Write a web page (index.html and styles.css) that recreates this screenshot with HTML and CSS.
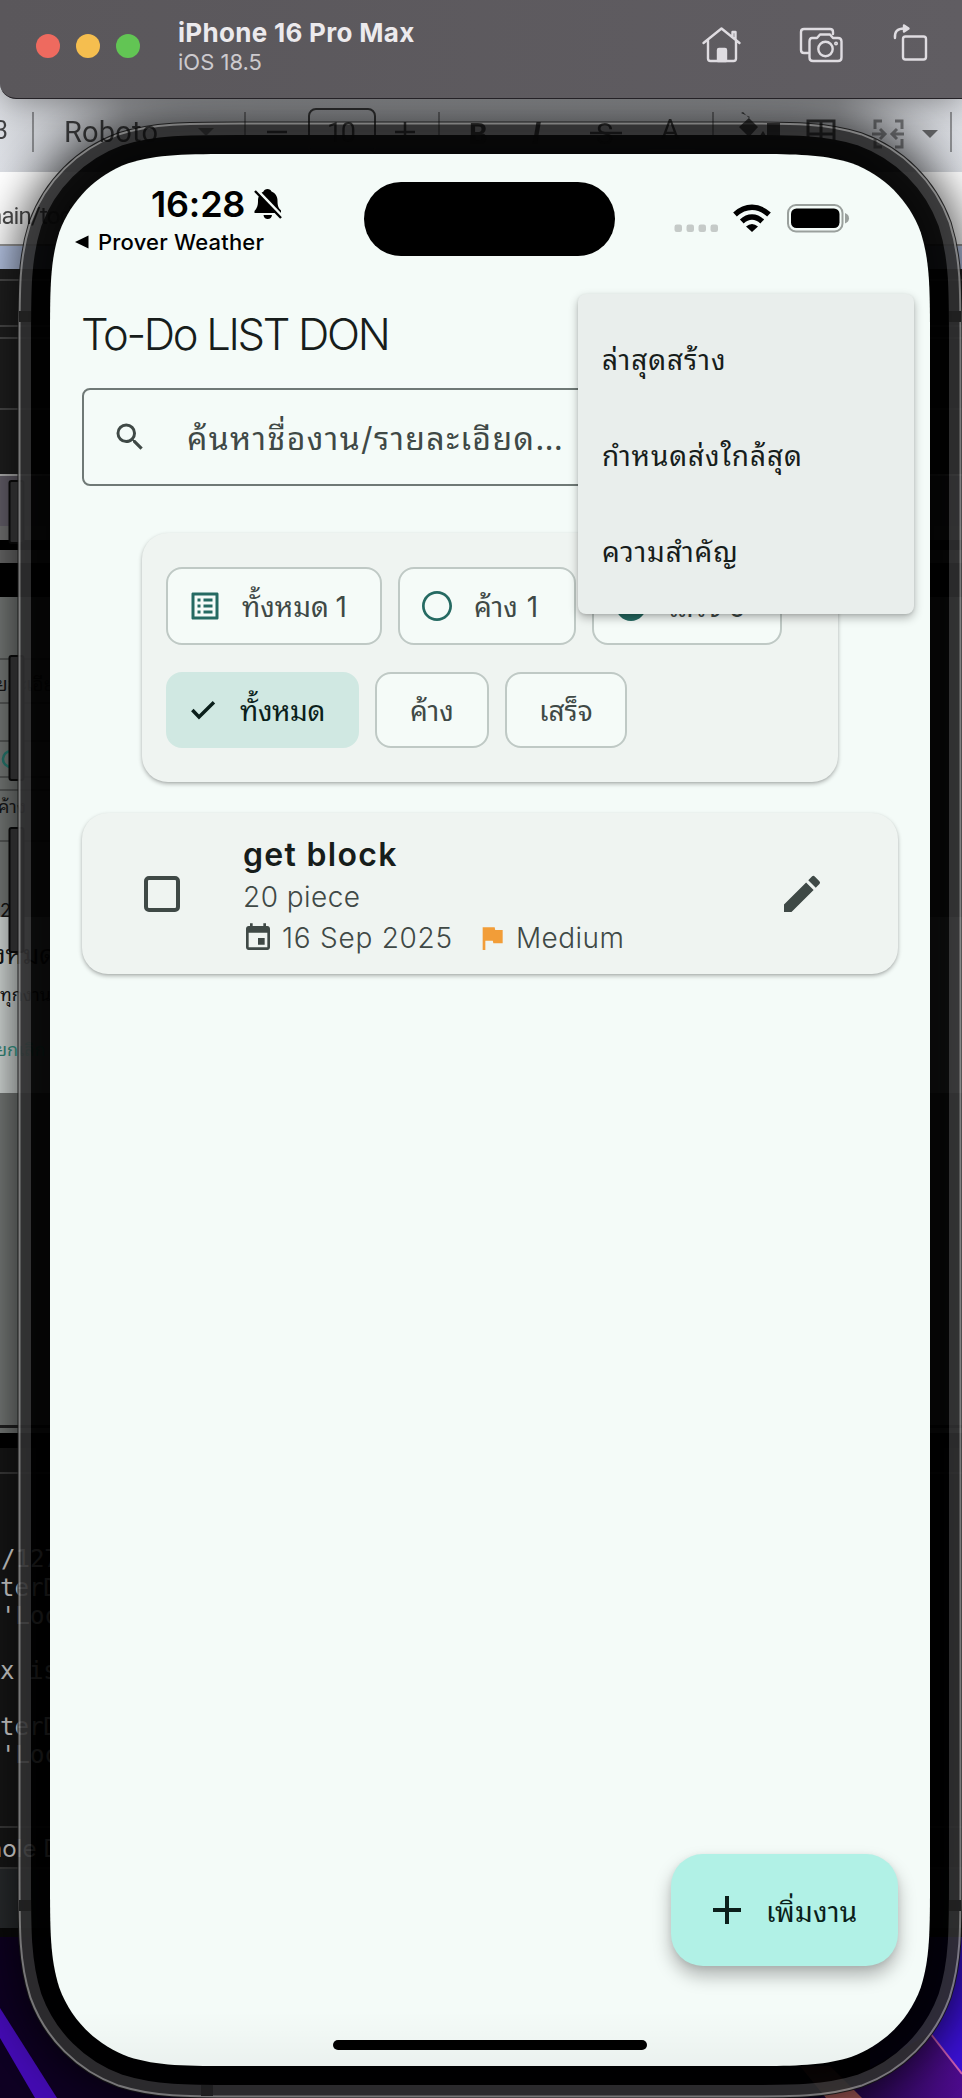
FILE: index.html
```html
<!DOCTYPE html>
<html lang="th">
<head>
<meta charset="utf-8">
<title>To-Do LIST DON</title>
<link rel="stylesheet" href="styles.css">
</head>
<body>
<div class="desktop">
  <svg class="layer backdrop" width="962" height="2098" viewBox="0 0 962 2098">
    <defs>
      <linearGradient id="sheet" x1="0" y1="0" x2="0" y2="1"><stop offset="0" stop-color="#dcdee2"/><stop offset="1" stop-color="#e6e9ef"/></linearGradient>
      <linearGradient id="violet" x1="0" y1="0" x2="1" y2="0"><stop offset="0" stop-color="#1b0638"/><stop offset="1" stop-color="#4c0b8c"/></linearGradient>
      <linearGradient id="shade" x1="0" y1="0" x2="1" y2="0"><stop offset="0" stop-color="#000" stop-opacity=".05"/><stop offset=".13" stop-color="#000" stop-opacity=".3"/><stop offset=".87" stop-color="#000" stop-opacity=".3"/><stop offset="1" stop-color="#000" stop-opacity=".05"/></linearGradient>
      <filter id="soft" x="-20%" y="-20%" width="140%" height="140%"><feGaussianBlur stdDeviation="22"/></filter>
      <path id="glass" d="M239.6 154H740.4C795 154 822.3 154 851.7 163.3 883.8 175 909 200.2 920.7 232.3 930 261.7 930 289 930 343.6V1876.4C930 1931 930 1958.3 920.7 1987.7 909 2019.8 883.8 2045 851.7 2056.7 822.3 2066 795 2066 740.4 2066H239.6C185 2066 157.7 2066 128.3 2056.7 96.2 2045 71 2019.8 59.3 1987.7 50 1958.3 50 1931 50 1876.4V343.6C50 289 50 261.7 59.3 232.3 71 200.2 96.2 175 128.3 163.3 157.7 154 185 154 239.6 154Z"/>
    </defs>
    <rect width="962" height="173" fill="url(#sheet)"/>
    <rect y="172" width="962" height="73" fill="#fff"/>
    <rect y="246" width="962" height="24" fill="#b9c8e8"/>
    <rect y="244" width="962" height="2" fill="#999"/>
    <rect y="269" width="962" height="270" fill="#202020"/>
    <path d="M0 280H962M0 326H962M0 338H962M0 409H962" stroke="#4c4c4c" stroke-width="2"/>
    <rect y="475" width="962" height="51" fill="#68636e"/>
    <rect y="474" width="962" height="2" fill="#bbb"/>
    <rect y="526" width="962" height="14" fill="#777"/>
    <rect y="540" width="962" height="57" fill="#000"/>
    <rect y="550" width="962" height="13" fill="#6d6d6d"/>
    <rect y="597" width="962" height="836" fill="#7b7f7d"/>
    <rect y="917" width="962" height="176" fill="#dfe5e3"/>
    <path d="M0 659H50M0 703H50M0 741H50M0 777H50M0 790H50M0 841H50" stroke="#4d504f" stroke-width="1.5"/>
    <rect y="1425" width="962" height="3" fill="#222"/>
    <rect y="1433" width="962" height="15" fill="#000"/>
    <rect y="1448" width="962" height="420" fill="#171717"/>
    <path d="M0 1473H962M0 1827H962M0 1868H962" stroke="#3d3d3d" stroke-width="2"/>
    <rect y="1869" width="962" height="59" fill="#292c2e"/>
    <rect y="1928" width="962" height="9" fill="#0a0a0a"/>
    <rect y="1937" width="962" height="161" fill="#0e0022"/>
    <path d="M0 2008 57 2098H35L0 2038Z" fill="#430bb2"/>
    <path d="M962 1937V2098H870V1937Z" fill="#3a10d4"/>
    <path d="M820 2098 930 2033 962 2074V2098Z" fill="url(#violet)"/>
    <path d="M930 2033 962 2074" stroke="#c85bb0" stroke-width="2"/>
    <path d="M800 2066H830L862 2098H826Z" fill="#a85a58"/>
    <use href="#glass" filter="url(#soft)" stroke="#000" stroke-width="76" opacity=".65"/>
    <rect y="90" width="962" height="82" fill="url(#shade)"/>
    <g class="thai-text">
      <text x="-4" y="691" font-size="19">ยละเอียด</text>
      <circle cx="11" cy="759" r="8" fill="none" stroke="#1d5f57" stroke-width="2.5"/>
      <text x="-2" y="813" font-size="18">ค้าง</text>
      <text x="0" y="917" font-size="18">2</text>
      <text x="-8" y="964" font-size="26">งหมดง</text>
      <text x="0" y="1001" font-size="18">ทุกงานออ</text>
      <text x="-4" y="1056" font-size="18" fill="#287064">ยกเลิก</text>
    </g>
    <g class="terminal">
      <text x="1" y="1567">/127</text>
      <text x="0" y="1596">terD</text>
      <text x="1" y="1624">'Loc</text>
      <text x="0" y="1679">x is</text>
      <text x="0" y="1735">terD</text>
      <text x="1" y="1763">'Loc</text>
      <text x="-12" y="1857" class="ui">nole D</text>
    </g>
    <g class="side-button">
      <rect x="9.500" y="481" width="14" height="62" rx="2"/>
      <rect x="9.500" y="656" width="14" height="124" rx="2"/>
      <rect x="9.500" y="828" width="14" height="124" rx="2"/>
    </g>
    <g opacity=".89">
      <use href="#glass" stroke="#161616" stroke-width="65"/>
      <use href="#glass" stroke="#858585" stroke-width="63"/>
      <use href="#glass" stroke="#303031" stroke-width="59"/>
      <path d="M19 311H31V322H19ZM949 311H961V322H949ZM19 1900H31V1911H19ZM949 1900H961V1911H949ZM201 2085H213V2096H201Z" fill="#222"/>
      <use href="#glass" stroke="#000" stroke-width="38"/>
    </g>
    <g opacity=".72">
      <g class="sheet-text">
        <text x="-6" y="139" font-size="25">3</text>
        <text x="64" y="142" font-size="29" textLength="94">Roboto</text>
        <text x="327" y="142" font-size="27" textLength="29">10</text>
        <text x="469" y="144" font-size="29" font-weight="700">B</text>
        <text x="532" y="144" font-size="31" font-style="italic" font-weight="700">I</text>
        <text x="596" y="144" font-size="29">S</text>
        <text x="661" y="139" font-size="28">A</text>
        <text x="-11" y="224" font-size="24" textLength="84">nain/tod</text>
      </g>
      <g fill="none" stroke="#080808">
        <path d="M33 112V152M245 112V152M439 112V152M713 112V152M951 112V152" stroke-width="2" opacity=".5"/>
        <rect x="309" y="109" width="66" height="46" rx="7" stroke-width="2"/>
        <path d="M267 132H287M395 132H415M405 122V142M590 133H622M649 145H695M649 150H695" stroke-width="2.5"/>
        <path d="M808 121H834V147H808ZM821 121V147M808 134H834" stroke-width="3"/>
        <path d="M882 121H875V129M895 121H902V129M875 139V147H882M902 139V147H895M872 134H884M880 129L885 134 880 139M904 134H892M897 129 892 134 897 139" stroke-width="3" opacity=".6"/>
      </g>
      <path d="M198 128H214L206 136ZM922 130H938L930 138Z" fill="#111" opacity=".8"/>
      <path d="M743 112 758 127 749 137 739 127 750 117 741 113ZM763 131C769 139 764 140 763 140S757 139 763 131ZM767 123H780V136H767Z" fill="#080808"/>
    </g>
    <use href="#glass" fill="#f4fbf8"/>
  </svg>

  <header class="layer titlebar">
    <div class="lights"><i class="red"></i><i class="yellow"></i><i class="green"></i></div>
    <div class="device"><b>iPhone 16 Pro Max</b><span>iOS 18.5</span></div>
    <svg class="tools" width="240" height="48" viewBox="696 20 240 48" fill="none" stroke="#dfdce1" stroke-width="2.400" stroke-linejoin="round" stroke-linecap="round">
      <path d="M703.500 43 721.500 28.500 739.500 43M708 40V58.500Q708 61 710.500 61H733.500Q736 61 736 58.500V40M732.500 37V32H735.500V39"/>
      <path d="M718 50Q718 49 719 49H725Q726 49 726 50V61H718Z" fill="#dfdce1"/>
      <path d="M808 53H804Q801 53 801 50V32Q801 29 804 29H830Q833 29 833 32V34"/>
      <path d="M812 38H817L820 34.500H830L833 38H838Q841.500 38 841.500 41.500V57.500Q841.500 61 838 61H813Q809.500 61 809.500 57.500V41.500Q809.500 38 812 38Z"/>
      <circle cx="825.500" cy="49" r="7.200"/><circle cx="836" cy="43.500" r=".8"/>
      <rect x="903" y="36.500" width="23" height="23" rx="2.500"/>
      <path d="M895 38Q894 28.500 904 28.500"/><path d="M904 25.500 908.500 28.500 904 31.500Z" fill="#dfdce1"/>
    </svg>
  </header>

  <main class="layer screen">
    <div class="status">
      <div class="clock">
        <div class="time">16:28
          <svg width="30" height="32" viewBox="0 0 30 32"><path d="M14.500 1C16.500 1 18 2 18.500 3.500 22.500 5 24.500 8.500 24.500 13 24.500 18 25.500 20 28 22.500V25H1.500V23C4 20 5 18 5 13 5 8.500 7 5 10.500 3.500 11 2 12.500 1 14.500 1ZM10.500 27H19Q18.500 31 14.700 31 11 31 10.500 27Z"/><path d="M3 1 29 28" stroke="#f4fbf8" stroke-width="3"/><path d="M2 3 28 30" stroke="#000" stroke-width="2.400"/></svg>
        </div>
        <div class="back"><svg width="16" height="14" viewBox="0 0 16 14"><path d="M1 7 14.500.5V13.500Z"/></svg>Prover Weather</div>
      </div>
      <div class="island"></div>
      <svg class="signals" width="180" height="30" viewBox="672 203 180 30">
        <g fill="#c5cac8"><rect x="674.500" y="224.500" width="7.500" height="7.500" rx="2.200"/><rect x="686.500" y="224.500" width="7.500" height="7.500" rx="2.200"/><rect x="698.500" y="224.500" width="7.500" height="7.500" rx="2.200"/><rect x="710.500" y="224.500" width="7.500" height="7.500" rx="2.200"/></g>
        <g fill="none" stroke="#000" stroke-width="5.500"><path d="M735 214.500Q743 207.300 752 207.300T769 214.500"/><path d="M741.800 221.500Q746.500 217 752 217T762.200 221.500"/></g>
        <path d="M746 226.500Q752 221.500 758 226.500L752 232Z"/>
        <rect x="788" y="205" width="54.500" height="26.500" rx="8" fill="none" stroke="#9aa09d" stroke-width="2"/>
        <rect x="791" y="208.500" width="48.500" height="19.500" rx="5.500"/>
        <path d="M845 213Q849 214.500 849 218.300T845 223.500Z" fill="#9aa09d"/>
      </svg>
    </div>

    <h1>To-Do LIST DON</h1>

    <div class="search">
      <svg width="36" height="36" viewBox="0 0 24 24"><path d="M15.500 14h-.79l-.28-.27A6.471 6.471 0 0 0 16 9.500 6.500 6.500 0 1 0 9.500 16c1.610 0 3.090-.59 4.230-1.570l.27.280v.79l5 4.990L20.490 19l-4.990-5zm-6 0C7.010 14 5 11.990 5 9.500S7.010 5 9.500 5 14 7.010 14 9.500 11.990 14 9.500 14z"/></svg>
      <span>ค้นหาชื่องาน/รายละเอียด…</span>
    </div>

    <section class="card filters">
      <div class="chips">
        <div class="chip all-count"><svg width="36" height="36" viewBox="0 0 24 24"><path d="M19 5v14H5V5h14m1.100-2H3.900c-.5 0-.9.4-.9.900v16.200c0 .4.400.9.900.9h16.200c.4 0 .9-.5.900-.9V3.900c0-.5-.5-.9-.9-.9zM11 7h6v2h-6V7zm0 4h6v2h-6v-2zm0 4h6v2h-6v-2zM7 7h2v2H7V7zm0 4h2v2H7v-2zm0 4h2v2H7v-2z"/></svg><span>ทั้งหมด <em>1</em></span></div>
        <div class="chip open-count"><svg width="36" height="36" viewBox="0 0 24 24"><path d="M12 2C6.480 2 2 6.480 2 12s4.480 10 10 10 10-4.480 10-10S17.520 2 12 2zm0 18.200c-4.530 0-8.200-3.670-8.200-8.200S7.470 3.800 12 3.800s8.200 3.670 8.200 8.200-3.670 8.200-8.200 8.200z"/></svg><span>ค้าง <em class="wide">1</em></span></div>
        <div class="chip done-count"><svg width="36" height="36" viewBox="0 0 24 24"><path d="M12 2C6.480 2 2 6.480 2 12s4.480 10 10 10 10-4.480 10-10S17.520 2 12 2zm-2 15-5-5 1.410-1.410L10 14.170l7.590-7.590L19 8l-9 9z"/></svg><span>เสร็จ <em>0</em></span></div>
      </div>
      <div class="chips second">
        <div class="chip selected"><svg width="32" height="32" viewBox="0 0 24 24"><path d="M4 12 9 17.200 20.200 6.200" fill="none" stroke="#0b1f1b" stroke-width="2.600"/></svg><span>ทั้งหมด</span></div>
        <div class="chip open"><span>ค้าง</span></div>
        <div class="chip done"><span>เสร็จ</span></div>
      </div>
    </section>

    <section class="card task">
      <i class="checkbox"></i>
      <div class="details">
        <h2>get block</h2>
        <p>20 piece</p>
        <p class="meta">
          <svg class="calendar" width="32" height="32" viewBox="0 0 24 24"><path d="M17 12h-5v5h5v-5zM16 1v2H8V1H6v2H5c-1.110 0-1.990.9-1.990 2L3 19c0 1.100.890 2 2 2h14c1.100 0 2-.9 2-2V5c0-1.100-.9-2-2-2h-1V1h-2zm3 18H5V8h14v11z"/></svg>
          <span class="date">16 Sep 2025</span>
          <svg class="flag" width="32" height="32" viewBox="0 0 24 24"><path d="M14.400 6 14 4H5v17h2v-7h5.600l.4 2h7V6z"/></svg>
          <span class="priority">Medium</span>
        </p>
      </div>
      <svg class="edit" width="48" height="48" viewBox="0 0 24 24"><path d="M3 17.250V21h3.750L17.810 9.940l-3.750-3.750L3 17.250zM20.710 7.040a.996.996 0 0 0 0-1.410l-2.340-2.340a.996.996 0 0 0-1.410 0l-1.830 1.830 3.750 3.750 1.830-1.830z"/></svg>
    </section>

    <nav class="menu"><div><span>ล่าสุดสร้าง</span></div><div><span>กำหนดส่งใกล้สุด</span></div><div><span>ความสำคัญ</span></div></nav>

    <footer>
      <div class="fab"><svg width="48" height="48" viewBox="0 0 24 24"><path d="M19 13h-6v6h-2v-6H5v-2h6V5h2v6h6v2z"/></svg><span>เพิ่มงาน</span></div>
      <div class="home"></div>
    </footer>
  </main>
</div>
</body>
</html>
```
FILE: styles.css
```css
* { box-sizing: border-box; }
body { margin: 0; width: 962px; height: 2098px; overflow: hidden; background: #111; font-family: Inter, "Noto Sans Thai Looped", "Noto Sans Thai", Loma, sans-serif; }
h1, h2, p { margin: 0; }
svg { display: block; flex: none; }
.desktop { display: grid; width: 962px; height: 2098px; }
.layer { grid-area: 1 / 1; }
.sheet-text { font-family: Roboto, sans-serif; fill: #060606; }
.thai-text { fill: #111; }
.terminal { font-family: "DejaVu Sans Mono", monospace; font-size: 24px; fill: #a8a8a8; }
.ui { font-family: Inter, sans-serif; }
.side-button { fill: #29292a; stroke: #080808; stroke-width: 2; }

.titlebar { z-index: 2; height: 99px; padding: 0 26px 0 36px; display: flex; align-items: flex-start; background: linear-gradient(90deg, #5a575b, #605d62); border-bottom: 1px solid #242126; border-bottom-left-radius: 16px; box-shadow: 0 2px 30px rgba(0, 0, 0, .3); }
.lights { display: flex; gap: 16px; margin-top: 34px; }
.lights i { width: 24px; height: 24px; border-radius: 50%; }
.red { background: #ee6a5f; } .yellow { background: #f5be4f; } .green { background: #62c554; }
.device { margin: 16px 0 0 38px; display: flex; flex-direction: column; color: #eceaed; }
.device b { font-size: 26px; line-height: 33px; letter-spacing: .3px; white-space: nowrap; }
.device span { font-size: 22px; line-height: 26px; color: #cdcace; }
.tools { margin: 20px 0 0 auto; }

.screen { position: relative; margin: 154px 32px 32px 50px; display: flex; flex-direction: column; align-items: stretch; color: #171d1b; background: linear-gradient(transparent calc(100% - 55px), rgba(0, 0, 0, .04)) no-repeat; clip-path: inset(0 0 0 0 round 0 0 124px 124px); }
.status { height: 112px; display: flex; align-items: flex-start; }
.clock { width: 314px; padding: 29px 0 0 24px; color: #000; }
.time { display: flex; gap: 8px; margin-left: 77px; align-items: center; font-size: 36px; font-weight: 600; line-height: 42px; letter-spacing: -.2px; }
.back { display: flex; align-items: center; gap: 8px; height: 33px; font-size: 22px; font-weight: 500; letter-spacing: .2px; white-space: nowrap; }
.island { width: 251px; height: 74px; margin-top: 28px; border-radius: 37px; background: #000; }
.signals { margin: 49px 0 0 57px; }
h1 { margin: 43px 0 0 31px; height: 79px; line-height: 50px; font-size: 43.500px; font-weight: 350; letter-spacing: -2.300px; }
.search { height: 98px; margin: 0 32px; border: 2px solid #6f7976; border-radius: 8px; display: flex; align-items: center; padding-left: 28px; gap: 39px; font-size: 32px; letter-spacing: 1.400px; color: #3f4946; fill: #3f4946; white-space: nowrap; }
.search span { margin-bottom: 3px; }
.card { background: #eff4f1; border-radius: 26px; box-shadow: 0 2px 4px rgba(0, 0, 0, .28), 0 1px 2px rgba(0, 0, 0, .06); }
.filters { height: 249px; margin: 47px 92px 0; padding: 34px 24px; }
.chips { display: flex; gap: 16px; }
.second { margin-top: 27px; }
.chip { height: 78px; border: 2px solid #bfc9c5; border-radius: 16px; background: #f5fbf8; display: flex; align-items: center; white-space: nowrap; font-size: 28px; color: #3f4946; fill: #256a62; }
.chip span { margin-bottom: 3px; }
.second .chip { height: 76px; justify-content: center; }
.chip em { font-style: normal; margin-left: -1.500px; }
.chip .wide { margin-left: 1px; }
.chip svg { margin: 0 19px 0 19px; }
.all-count { width: 216px; }
.open-count { width: 178px; }
.done-count { width: 190px; }
.second .selected { width: 193px; background: #d0e8e2; border-color: #d0e8e2; color: #0b1f1b; fill: #0b1f1b; justify-content: flex-start; letter-spacing: -.4px; }
.second .selected svg { margin-right: 21px; }
.open { width: 114px; }
.done { width: 122px; }
.task { height: 161px; margin: 31px 32px 0; padding: 0 72px 0 62px; display: flex; align-items: center; color: #3f4946; fill: #3f4946; }
.checkbox { width: 36px; height: 36px; border: 4px solid #3f4946; border-radius: 5px; }
.details { flex: 1; margin: 4px 0 0 63px; }
h2 { font-size: 32px; line-height: 44px; font-weight: 600; letter-spacing: 1.300px; color: #171d1b; }
.details p { font-size: 28px; line-height: 40px; font-weight: 350; letter-spacing: .450px; }
.details p + p { margin-top: 1px; }
.details .meta { display: flex; align-items: center; }
.calendar { margin-left: -1px; }
.details .date { margin: 0 23px 0 8px; letter-spacing: .750px; }
.flag { fill: #f29d38; margin-right: 8px; }
.priority { letter-spacing: .450px; }
.menu { position: absolute; left: 528px; top: 140px; width: 336px; height: 320px; padding: 15px 24px; border-radius: 8px; background: #e9eeec; box-shadow: 0 4px 10px rgba(0, 0, 0, .28), 0 1px 3px rgba(0, 0, 0, .1); font-size: 28px; letter-spacing: .900px; }
.menu div { height: 96px; display: flex; align-items: center; }
footer { margin-top: auto; display: flex; flex-direction: column; }
.fab { align-self: flex-end; width: 227px; height: 112px; margin: 0 32px 74px; border-radius: 32px; background: #b1f1e6; box-shadow: 0 10px 18px rgba(0, 0, 0, .28), 0 2px 6px rgba(0, 0, 0, .08); display: flex; align-items: center; gap: 15px; padding-left: 32px; font-size: 28px; letter-spacing: .200px; color: #0b1f1b; fill: #0b1f1b; }
.fab span { margin-bottom: 2px; }
.home { width: 314px; height: 10px; margin: 0 0 16px 283px; border-radius: 5px; background: #000; }
```
